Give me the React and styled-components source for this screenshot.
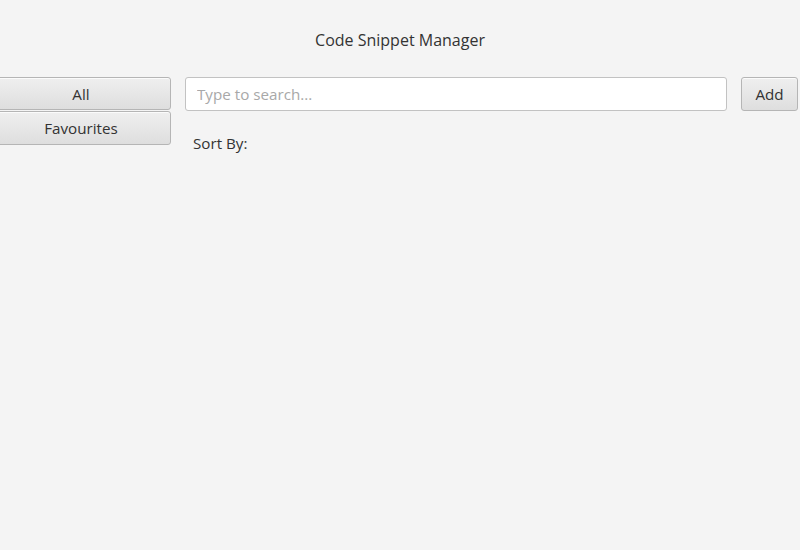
import React from "react";
import styled, { createGlobalStyle } from "styled-components";

const Global = createGlobalStyle`
  html, body { margin: 0; padding: 0; background: #f4f4f4; }
  body { font-family: "Open Sans", "Segoe UI", sans-serif; font-size: 15px; color: #333; }
  * { box-sizing: border-box; }
`;

const Page = styled.div`
  width: 800px;
  height: 550px;
  background: #f4f4f4;
  overflow: hidden;
`;

const Title = styled.div`
  height: 77px;
  padding-top: 29px;
  text-align: center;
  font-size: 16px;
  line-height: 22px;
  color: #333;
`;

const Body = styled.div`
  display: flex;
  align-items: flex-start;
`;

const Sidebar = styled.div`
  display: flex;
  flex-direction: column;
  gap: 1px;
  width: 180px;
  margin-left: -9px;
`;

const Button = styled.button`
  height: ${(p) => p.$h || 33}px;
  width: 100%;
  font-family: inherit;
  font-size: 15.2px;
  color: #333;
  border: 1px solid #b5b5b5;
  border-radius: 3px;
  background: linear-gradient(#efefef, #dedede);
  box-shadow: inset 0 1px 0 #fbfbfb;
  padding: 0;
  cursor: pointer;
`;

const Main = styled.div`
  flex: 1;
  display: flex;
  flex-direction: column;
  padding-left: 14px;
  padding-right: 2px;
`;

const SearchRow = styled.div`
  display: flex;
  gap: 14px;
`;

const Search = styled.input`
  flex: 1;
  height: 34px;
  border: 1px solid #c2c2c2;
  border-radius: 3px;
  background: #fff;
  font-family: inherit;
  font-size: 15.2px;
  padding: 0 11px;
  color: #333;
  outline: none;
  &::placeholder { color: #a8a8a8; }
`;

const AddButton = styled(Button)`
  width: 57px;
  height: 34px;
`;

const SortLabel = styled.div`
  margin-top: 22px;
  margin-left: 8px;
  font-size: 15.2px;
  line-height: 20px;
  color: #333;
`;

export default function App() {
  return (
    <Page>
      <Global />
      <Title>Code Snippet Manager</Title>
      <Body>
        <Sidebar>
          <Button>All</Button>
          <Button $h={34}>Favourites</Button>
        </Sidebar>
        <Main>
          <SearchRow>
            <Search placeholder="Type to search..." />
            <AddButton>Add</AddButton>
          </SearchRow>
          <SortLabel>Sort By:</SortLabel>
        </Main>
      </Body>
    </Page>
  );
}
